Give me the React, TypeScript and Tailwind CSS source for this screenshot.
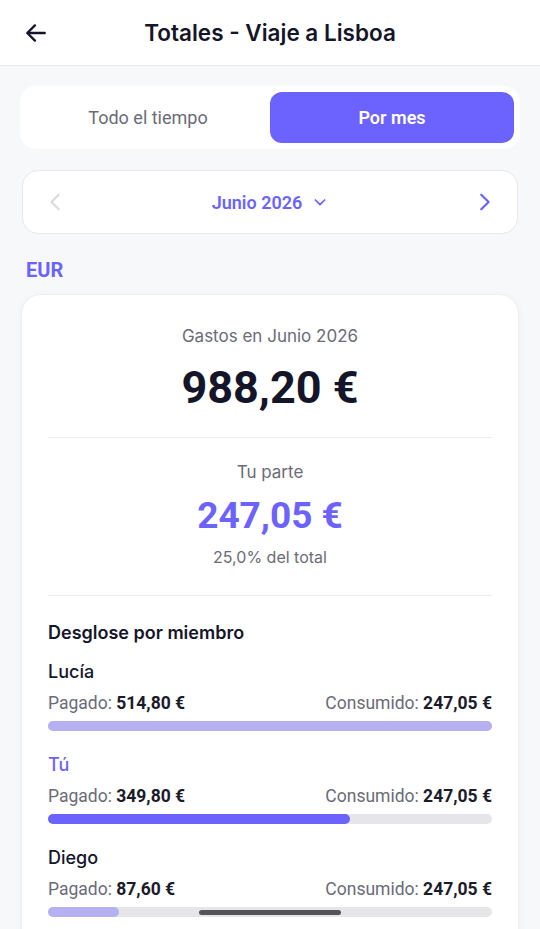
import React from "react";

const PURPLE = "#6c63ff";

type Member = { name: string; paid: string; consumed: string; pct: number; me?: boolean };

const members: Member[] = [
  { name: "Lucía", paid: "514,80 €", consumed: "247,05 €", pct: 100 },
  { name: "Tú", paid: "349,80 €", consumed: "247,05 €", pct: 68, me: true },
  { name: "Diego", paid: "87,60 €", consumed: "247,05 €", pct: 16 },
];

const inter = "font-['Inter',sans-serif]";
const roboto = "font-['Roboto',sans-serif]";

function MemberRow({ m }: { m: Member }) {
  return (
    <div>
      <div className={`${inter} text-[18px] leading-[26px] font-medium ${m.me ? "text-[#6c63ff]" : "text-[#15152a]"}`}>
        {m.name}
      </div>
      <div className={`${roboto} mt-[7px] flex justify-between text-[17.5px] leading-[22px]`}>
        <span className="text-[#6b6b78]">
          Pagado: <span className="font-bold text-[#1b1b2b]">{m.paid}</span>
        </span>
        <span className="text-[#6b6b78]">
          Consumido: <span className="font-bold text-[#1b1b2b]">{m.consumed}</span>
        </span>
      </div>
      <div className="mt-[7px] h-[10px] w-full rounded-full bg-[#e6e6ea]">
        <div
          className={`h-full rounded-full ${m.me ? "bg-[#6c63ff]" : "bg-[#b5b0f0]"}`}
          style={{ width: `${m.pct}%` }}
        />
      </div>
    </div>
  );
}

export default function App() {
  return (
    <div className="relative h-[929px] w-full overflow-hidden bg-[#f7f8fa]">
      {/* header */}
      <div className="flex h-[66px] items-center border-b border-[#e6e7eb] bg-white px-[23px]">
        <svg width="26" height="26" viewBox="0 0 24 24" fill="none" stroke="#15152a" strokeWidth="2.2" strokeLinecap="round" strokeLinejoin="round">
          <path d="M20 12H4.5" />
          <path d="M11 5l-7 7 7 7" />
        </svg>
        <div className={`${inter} flex-1 pr-[26px] text-center text-[22.5px] font-semibold text-[#15152a]`}>
          Totales - Viaje a Lisboa
        </div>
      </div>

      {/* tabs */}
      <div className="mx-5 mt-[20px] flex rounded-[16px] bg-white p-[6px]">
        <div className={`${roboto} flex h-[51px] flex-1 items-center justify-center text-[18px] text-[#6b6b78]`}>
          Todo el tiempo
        </div>
        <div className={`${roboto} flex h-[51px] flex-1 items-center justify-center rounded-[12px] bg-[#6c63ff] text-[18px] font-semibold text-white`}>
          Por mes
        </div>
      </div>

      {/* month selector */}
      <div className="mx-[22px] mt-[21px] flex h-[64px] items-center justify-between rounded-[16px] border border-[#e8e8ec] bg-white px-[22px]">
        <svg width="22" height="22" viewBox="0 0 24 24" fill="none" stroke="#d9d9de" strokeWidth="2.2" strokeLinecap="round" strokeLinejoin="round">
          <path d="M15 4l-8 8 8 8" />
        </svg>
        <div className={`${roboto} flex items-center gap-[10px] text-[18px] font-semibold text-[#6c63ff]`}>
          Junio 2026
          <svg width="16" height="16" viewBox="0 0 24 24" fill="none" stroke={PURPLE} strokeWidth="2.5" strokeLinecap="round" strokeLinejoin="round">
            <path d="M5 9l7 7 7-7" />
          </svg>
        </div>
        <svg width="22" height="22" viewBox="0 0 24 24" fill="none" stroke={PURPLE} strokeWidth="2.4" strokeLinecap="round" strokeLinejoin="round">
          <path d="M9 4l8 8-8 8" />
        </svg>
      </div>

      <div className={`${roboto} ml-[26px] mt-[23px] text-[20px] font-bold leading-[26px] text-[#6c63ff]`}>EUR</div>

      {/* card */}
      <div className="mx-[21px] mt-[11px] rounded-[20px] border border-[#efeff2] bg-white px-[26px] pb-10 pt-[29px] shadow-[0_2px_8px_rgba(0,0,0,0.04)]">
        <div className={`${inter} text-center text-[17px] leading-[24px] text-[#6b6b78]`}>Gastos en Junio 2026</div>
        <div className={`${roboto} mt-[14px] text-center text-[45px] font-bold leading-[52px] text-[#15152a]`}>988,20 €</div>
        <div className="mt-[23px] h-px bg-[#ececef]" />

        <div className={`${inter} mt-[22px] text-center text-[17px] leading-[24px] text-[#6b6b78]`}>Tu parte</div>
        <div className={`${roboto} mt-[10px] text-center text-[37px] font-bold leading-[44px] text-[#6c63ff]`}>247,05 €</div>
        <div className={`${inter} mt-[7px] text-center text-[16px] leading-[24px] text-[#6b6b78]`}>25,0% del total</div>
        <div className="mt-[26px] h-px bg-[#ececef]" />

        <div className={`${inter} mt-[24px] text-[18px] font-semibold leading-[26px] text-[#15152a]`}>Desglose por miembro</div>
        <div className="mt-[13px] flex flex-col gap-[21px]">
          {members.map((m) => (
            <MemberRow key={m.name} m={m} />
          ))}
        </div>
      </div>

      {/* home indicator */}
      <div className="absolute bottom-[14px] left-1/2 h-[5px] w-[142px] -translate-x-1/2 rounded-full bg-[#555558]" />
    </div>
  );
}
